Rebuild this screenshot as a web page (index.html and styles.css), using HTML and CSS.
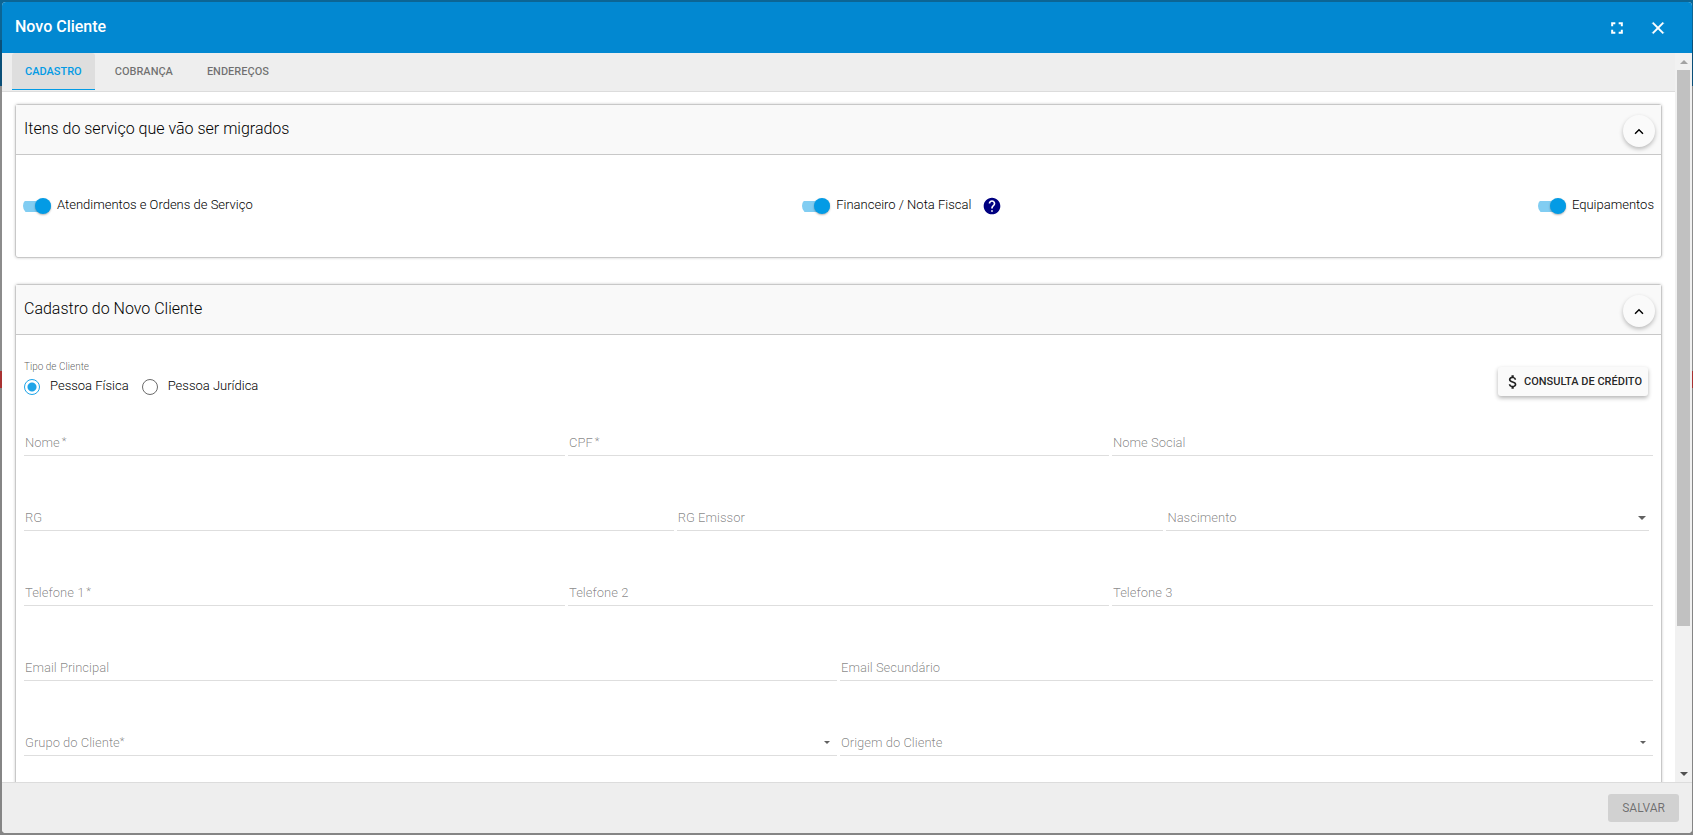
FILE: index.html
```html
<!DOCTYPE html>
<html lang="pt-BR">
<head>
<meta charset="utf-8">
<title>Novo Cliente</title>
<link rel="stylesheet" href="styles.css">
</head>
<body>
<main class="dialog">
  <header class="toolbar">
    <h1 class="toolbar-title">Novo Cliente</h1>
    <button class="icon-button" type="button" aria-label="Tela cheia">
      <svg width="20" height="20" viewBox="0 0 24 24"><path fill="currentColor" d="M5 5h5v2.400H7.400V10H5zM14 5h5v5h-2.400V7.400H14zM5 14h2.400v2.600H10V19H5zM16.600 14H19v5h-5v-2.400h2.600z"/></svg>
    </button>
    <button class="icon-button" type="button" aria-label="Fechar">
      <svg width="20" height="20" viewBox="0 0 24 24"><path fill="currentColor" stroke="currentColor" stroke-width=".5" d="M19 6.410L17.590 5 12 10.590 6.410 5 5 6.410 10.590 12 5 17.590 6.410 19 12 13.410 17.590 19 19 17.590 13.410 12z"/></svg>
    </button>
  </header>

  <div class="content">
    <div class="scroll-area">
      <nav class="tabs">
        <button class="tab tab-active" type="button">CADASTRO</button>
        <button class="tab" type="button">COBRANÇA</button>
        <button class="tab" type="button">ENDEREÇOS</button>
      </nav>

      <section class="panel">
        <div class="panel-header">
          <h2 class="panel-title">Itens do serviço que vão ser migrados</h2>
          <button class="collapse" type="button" aria-label="Recolher">
            <svg width="18" height="18" viewBox="0 0 24 24"><path fill="currentColor" d="M7.410 16.400L12 11.830l4.590 4.570L18 15l-6-6-6 6z"/></svg>
          </button>
        </div>
        <div class="switches">
          <label class="switch"><input class="switch-input" type="checkbox" checked><span class="switch-text">Atendimentos e Ordens de Serviço</span></label>
          <div class="switch-group">
            <label class="switch"><input class="switch-input" type="checkbox" checked><span class="switch-text">Financeiro / Nota Fiscal</span></label>
            <svg class="help" width="20" height="20" viewBox="0 0 24 24"><path fill="currentColor" d="M12 2C6.480 2 2 6.480 2 12s4.480 10 10 10 10-4.480 10-10S17.520 2 12 2zm1 17h-2v-2h2v2zm2.070-7.750l-.9.920C13.450 12.900 13 13.500 13 15h-2v-.5c0-1.100.45-2.100 1.170-2.830l1.240-1.260c.37-.36.59-.86.59-1.410 0-1.100-.9-2-2-2s-2 .9-2 2H8c0-2.210 1.790-4 4-4s4 1.790 4 4c0 .88-.36 1.680-.93 2.250z"/></svg>
          </div>
          <label class="switch"><input class="switch-input" type="checkbox" checked><span class="switch-text">Equipamentos</span></label>
        </div>
      </section>

      <section class="panel">
        <div class="panel-header">
          <h2 class="panel-title">Cadastro do Novo Cliente</h2>
          <button class="collapse" type="button" aria-label="Recolher">
            <svg width="18" height="18" viewBox="0 0 24 24"><path fill="currentColor" d="M7.410 16.400L12 11.830l4.590 4.570L18 15l-6-6-6 6z"/></svg>
          </button>
        </div>
        <form class="form">
          <div class="form-top">
            <fieldset class="client-type">
              <legend class="legend">Tipo de Cliente</legend>
              <div class="radios">
                <label class="radio"><input class="radio-input" type="radio" name="tipo" checked>Pessoa Física</label>
                <label class="radio"><input class="radio-input" type="radio" name="tipo">Pessoa Jurídica</label>
              </div>
            </fieldset>
            <button class="credit" type="button">
              <svg width="18" height="18" viewBox="0 0 24 24"><path fill="currentColor" d="M11.800 10.900c-2.270-.59-3-1.200-3-2.150 0-1.090 1.010-1.850 2.700-1.850 1.780 0 2.440.85 2.500 2.100h2.210c-.07-1.720-1.120-3.300-3.210-3.810V3h-3v2.160c-1.940.42-3.500 1.680-3.500 3.610 0 2.310 1.910 3.460 4.700 4.130 2.500.6 3 1.480 3 2.410 0 .69-.49 1.790-2.700 1.790-2.060 0-2.870-.92-2.980-2.100h-2.200c.12 2.190 1.760 3.420 3.680 3.830V21h3v-2.150c1.950-.37 3.500-1.500 3.500-3.550 0-2.840-2.430-3.810-4.700-4.400z"/></svg>
              <span>CONSULTA DE CRÉDITO</span>
            </button>
          </div>

          <div class="row row-thirds">
            <label class="field"><span class="field-label">Nome<small class="required required-spaced">*</small></span><input class="control" type="text" required></label>
            <label class="field"><span class="field-label">CPF<small class="required required-spaced">*</small></span><input class="control" type="text" required></label>
            <label class="field"><span class="field-label">Nome Social</span><input class="control" type="text"></label>
          </div>
          <div class="row row-document">
            <label class="field"><span class="field-label">RG</span><input class="control" type="text"></label>
            <label class="field"><span class="field-label">RG Emissor</span><input class="control" type="text"></label>
            <label class="field field-date"><span class="field-label">Nascimento</span><input class="control" type="text"><span class="caret caret-large"></span></label>
          </div>
          <div class="row row-thirds">
            <label class="field"><span class="field-label">Telefone 1<small class="required required-spaced">*</small></span><input class="control" type="tel" required></label>
            <label class="field"><span class="field-label">Telefone 2</span><input class="control" type="tel"></label>
            <label class="field"><span class="field-label">Telefone 3</span><input class="control" type="tel"></label>
          </div>
          <div class="row row-halves">
            <label class="field"><span class="field-label">Email Principal</span><input class="control" type="email"></label>
            <label class="field"><span class="field-label">Email Secundário</span><input class="control" type="email"></label>
          </div>
          <div class="row row-halves">
            <label class="field"><span class="field-label">Grupo do Cliente<small class="required">*</small></span><select class="control" required><option value=""></option></select><span class="caret"></span></label>
            <label class="field"><span class="field-label">Origem do Cliente</span><select class="control"><option value=""></option></select><span class="caret"></span></label>
          </div>
        </form>
      </section>
    </div>

    <div class="scrollbar" aria-hidden="true">
      <span class="arrow arrow-up"></span>
      <div class="track"><div class="thumb"></div></div>
      <span class="arrow arrow-down"></span>
    </div>
  </div>

  <footer class="actions">
    <button class="save" type="button" disabled>SALVAR</button>
  </footer>
</main>
</body>
</html>
```
FILE: styles.css
```css
* { box-sizing: border-box; }

body {
  margin: 0;
  height: 100vh;
  padding: 2px 1px 2px 2px;
  overflow: hidden;
  font-family: Roboto, "Noto Sans", sans-serif;
  font-size: 13px;
  font-weight: 300;
  color: #000;
  background: linear-gradient(#0c6594 0 40px, #0a4f78 40px 86px, #8c8c8c 86px 371px, #a83232 371px 388px, #858585 388px);
}

button, input, select { font: inherit; color: inherit; }
button { border: 0; padding: 0; background: none; }
svg { display: block; flex: none; }

.dialog {
  height: 100%;
  display: flex;
  flex-direction: column;
  background: #fff;
  border-radius: 4px;
  overflow: hidden;
}

.toolbar {
  flex: none;
  height: 51px;
  display: flex;
  align-items: center;
  gap: 21px;
  padding: 0 24px 0 13px;
  background: #0288d1;
  color: #fff;
}
.toolbar-title {
  flex: 1;
  margin: 0;
  padding-bottom: 2px;
  font-size: 16px;
  font-weight: 500;
}

.content { flex: 1; min-height: 0; display: flex; }
.scroll-area { flex: 1; overflow: auto; scrollbar-width: none; }

.tabs {
  display: flex;
  gap: 6px;
  height: 39px;
  padding: 0 10px;
  background: #eee;
  border-bottom: 1px solid #dcdcdc;
}
.tab {
  height: 37px;
  padding: 0 14px;
  border-bottom: 1px solid transparent;
  border-radius: 3px 3px 0 0;
  font-size: 11px;
  font-weight: 500;
  color: rgba(0, 0, 0, 0.54);
}
.tab-active { padding: 0 13px; background: #dedede; color: #039be5; border-bottom-color: #039be5; }

.panel {
  margin: 12px 13px 26px;
  border: 1px solid #c8c8c8;
  border-radius: 3px;
  box-shadow: 0 0 3px rgba(0, 0, 0, 0.2);
}
.panel-header {
  display: flex;
  align-items: center;
  justify-content: space-between;
  height: 50px;
  padding: 3px 6px 0 8px;
  background: #f9f9f9;
  border-bottom: 1px solid #c8c8c8;
}
.panel-title { margin: 0; padding-bottom: 5px; font-size: 16px; font-weight: 300; }
.collapse {
  width: 32px;
  height: 32px;
  display: grid;
  place-items: center;
  border-radius: 50%;
  background: #fafafa;
  box-shadow: 0 2px 4px rgba(0, 0, 0, 0.26);
}

.switches {
  display: flex;
  align-items: center;
  justify-content: space-between;
  height: 102px;
  padding: 0 7px;
}
.switch { display: flex; align-items: center; gap: 6px; margin-right: 14px; }
.switch:last-child { margin-right: 0; }
.switch-text { padding-bottom: 3px; }
.switch-group { display: flex; align-items: center; }
.switch-group .switch { margin-right: 11px; }
.switch-input {
  appearance: none;
  width: 28px;
  height: 16px;
  margin: 0;
  display: flex;
  align-items: center;
  justify-content: flex-end;
  background: linear-gradient(#81cdf2, #81cdf2) center / 28px 11px no-repeat;
  border-radius: 8px;
}
.switch-input::before {
  content: "";
  width: 16px;
  height: 16px;
  border-radius: 50%;
  background: #039be5;
  box-shadow: 0 1px 2px rgba(0, 0, 0, 0.3);
}
.help { color: #000080; }

.form { padding: 25px 5px 40px 8px; }
.form-top { display: flex; justify-content: space-between; align-items: flex-end; padding-right: 8px; }
.client-type { margin: 0; padding: 0; border: 0; }
.legend { padding: 0; font-size: 10px; line-height: 14px; color: rgba(0, 0, 0, 0.65); }
.radios { display: flex; gap: 13px; padding-top: 3px; }
.radio { display: flex; align-items: flex-start; gap: 10px; height: 19px; line-height: 18px; }
.radio-input {
  appearance: none;
  width: 16px;
  height: 16px;
  margin: 2px 0 0;
  border: 1px solid #6b6b6b;
  border-radius: 50%;
}
.radio-input:checked { border-color: #1ea4e8; background: radial-gradient(#1ea4e8 0 4px, transparent 5px); }
.credit {
  display: flex;
  align-items: center;
  gap: 2px;
  height: 29px;
  padding: 0 6px;
  border-radius: 3px;
  background: #fafafa;
  color: rgba(0, 0, 0, 0.87);
  font-size: 11px;
  font-weight: 500;
  box-shadow: 0 2px 4px rgba(0, 0, 0, 0.3);
}

.row { display: grid; margin-top: 49px; }
.form-top + .row { margin-top: 34px; }
.row-thirds { grid-template-columns: repeat(3, 1fr); }
.row-document { grid-template-columns: 4fr 3fr 3fr; }
.row-halves { grid-template-columns: repeat(2, 1fr); }
.field {
  display: grid;
  grid-template-columns: 1fr auto;
  align-items: center;
  height: 26px;
  margin-right: 3px;
  border-bottom: 1px solid #dedede;
  color: rgba(0, 0, 0, 0.48);
}
.field-date { margin-right: 7px; }
.field-label { grid-area: 1 / 1; padding-left: 1px; line-height: 24px; pointer-events: none; }
.row-halves .field-label { padding-top: 1px; }
.required { font-size: 11px; line-height: 10px; vertical-align: 2px; }
.required-spaced { padding-left: 2px; }
.control {
  grid-area: 1 / 1 / 2 / 3;
  appearance: none;
  width: 100%;
  height: 24px;
  border: 0;
  padding: 0 2px;
  background: transparent;
  outline: 0;
}
.caret {
  grid-area: 1 / 2;
  width: 0;
  height: 0;
  margin-right: 7px;
  border: 3px solid transparent;
  border-top-color: #616161;
  border-bottom: 0;
  pointer-events: none;
}
.caret-large { border-width: 4px 4px 0; margin-right: 3px; }

.scrollbar {
  flex: none;
  width: 17px;
  display: flex;
  flex-direction: column;
  align-items: center;
  background: #f1f1f1;
}
.arrow { height: 17px; display: grid; place-items: center; }
.arrow::before { content: ""; border: 4px solid transparent; }
.arrow-up::before { border-bottom-color: #a3a3a3; border-top: 0; }
.arrow-down::before { border-top-color: #505050; border-bottom: 0; }
.track { flex: 1; width: 13px; }
.thumb { height: 80%; background: #c1c1c1; }

.actions {
  flex: none;
  height: 51px;
  display: flex;
  align-items: center;
  justify-content: flex-end;
  padding: 0 13px;
  background: #eee;
  border-top: 1px solid #dcdcdc;
}
.save {
  height: 28px;
  padding: 0 14px;
  border-radius: 3px;
  background: #d1d1d1;
  color: rgba(0, 0, 0, 0.48);
  font-size: 12px;
  font-weight: 400;
}
```
